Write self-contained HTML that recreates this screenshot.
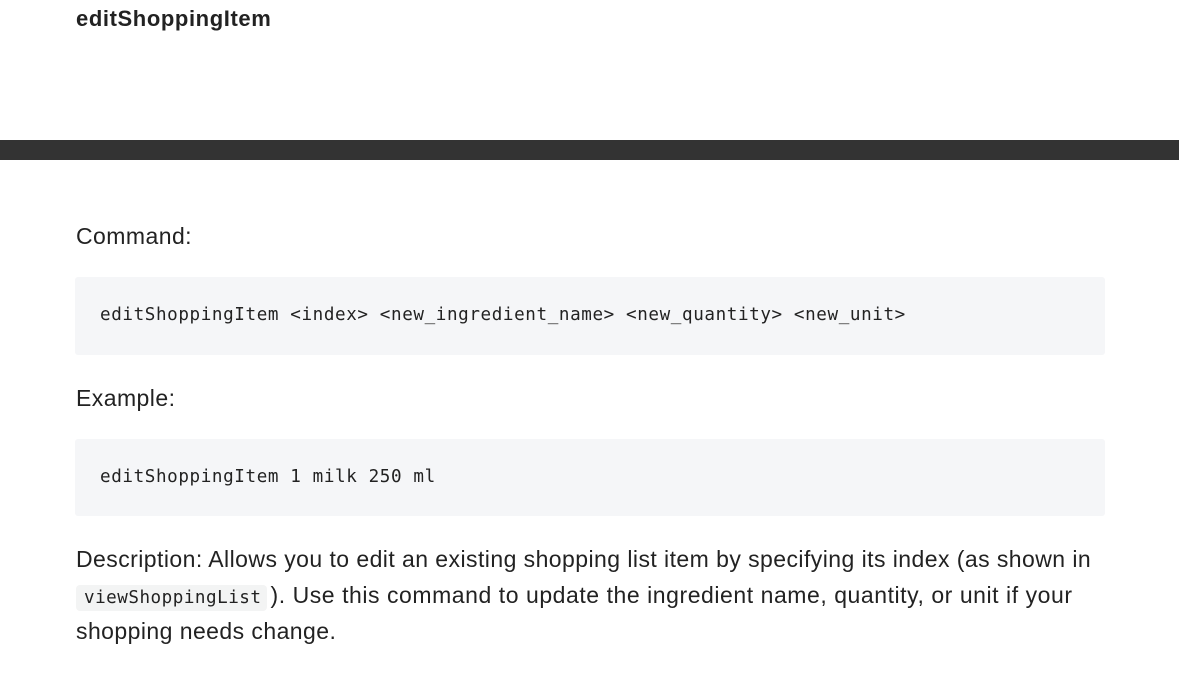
<!DOCTYPE html>
<html><head><meta charset="utf-8"><style>
body{margin:0;width:1179px;height:679px;overflow:hidden;background:#fff;font-family:"Liberation Sans",sans-serif;color:#24292e;position:relative}
.a{position:absolute;white-space:nowrap}
h3{position:absolute;left:76px;top:6px;margin:0;font-size:22px;font-weight:bold;color:#222;letter-spacing:0.6px}
.bar{position:absolute;left:0;top:140px;width:1179px;height:20px;background:#333}
.p{font-size:23px;color:#222;letter-spacing:0.44px}
.pre{position:absolute;left:75px;width:1030px;background:#f5f6f8;border-radius:3px}
.mono{font-family:"DejaVu Sans Mono","Liberation Mono",monospace;font-size:17.6px;letter-spacing:0.6px;color:#222}
code{font-family:"DejaVu Sans Mono","Liberation Mono",monospace;font-size:17.6px;letter-spacing:0.5px;background:#f3f4f4;border-radius:4px;padding:3px 6px 3px 8px;margin-right:3px}
</style></head><body>
<h3>editShoppingItem</h3>
<div class="bar"></div>
<div class="a p" style="left:76px;top:223px">Command:</div>
<div class="pre" style="top:277px;height:78px"></div>
<div class="a mono" style="left:100px;top:305px">editShoppingItem &lt;index&gt; &lt;new_ingredient_name&gt; &lt;new_quantity&gt; &lt;new_unit&gt;</div>
<div class="a p" style="left:76px;top:385px">Example:</div>
<div class="pre" style="top:439px;height:77px"></div>
<div class="a mono" style="left:100px;top:467px">editShoppingItem 1 milk 250 ml</div>
<div class="a p" style="left:76px;top:546px">Description: Allows you to edit an existing shopping list item by specifying its index (as shown in</div>
<div class="a p" style="left:76px;top:582px;letter-spacing:0.55px"><code>viewShoppingList</code>). Use this command to update the ingredient name, quantity, or unit if your</div>
<div class="a p" style="left:76px;top:618px">shopping needs change.</div>
</body></html>
